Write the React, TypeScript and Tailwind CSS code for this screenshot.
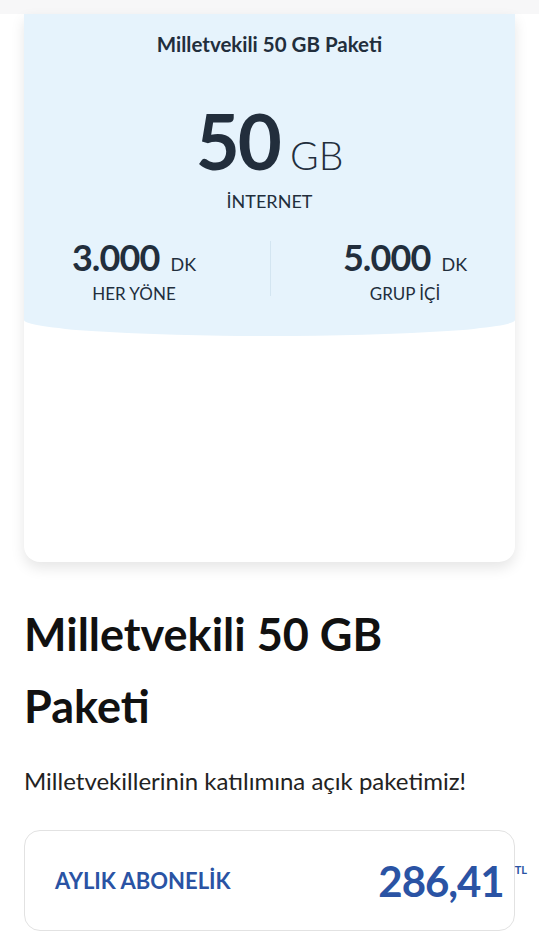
const font = "font-['Lato','Inter','Noto_Sans',sans-serif]";

function Minutes({ value, label, className }: { value: string; label: string; className: string }) {
  return (
    <div className={`flex flex-1 flex-col items-center ${className}`}>
      <div className="flex items-baseline gap-[11px] leading-[36px]">
        <span className="text-[36px] font-bold tracking-tight">{value}</span>
        <span className="text-[18px] font-normal">DK</span>
      </div>
      <span className="mt-[1px] text-[17px] leading-[22px]">{label}</span>
    </div>
  );
}

export default function App() {
  return (
    <div className={`min-h-screen bg-white text-[#222e3c] ${font}`}>
      <div className="h-[14px] bg-[#f7f7f8]" />

      <div className="px-6">
        <div className="h-[548px] overflow-hidden rounded-b-2xl bg-white shadow-[0_6px_14px_rgba(0,0,0,0.1)]">
          <div className="flex h-[322px] flex-col items-center rounded-b-[50%_16px] bg-[#e6f3fc]">
            <h2 className="mt-[18px] text-[20.5px] font-bold leading-[24px]">Milletvekili 50 GB Paketi</h2>

            <div className="mt-[55px] flex items-baseline gap-[10px] leading-[60px]">
              <span className="text-[76px] font-bold tracking-tight">50</span>
              <span className="text-[39px] font-light">GB</span>
            </div>
            <span className="mt-[5px] text-[18px] leading-[22px]">İNTERNET</span>

            <div className="mt-[27px] flex w-full items-stretch">
              <Minutes value="3.000" label="HER YÖNE" className="pr-[26px]" />
              <div className="mb-[9px] mt-[2px] w-px bg-[#d3e5f1]" />
              <Minutes value="5.000" label="GRUP İÇİ" className="pl-[24px]" />
            </div>
          </div>
        </div>
      </div>

      <div className="px-6 pt-9">
        <h1 className="text-[45px] font-bold leading-[72px] text-[#111]">Milletvekili 50 GB Paketi</h1>
        <p className="mt-[25px] text-[24px] leading-[28px] text-[#222]">
          Milletvekillerinin katılımına açık paketimiz!
        </p>

        <div className="mt-[35px] flex h-[101px] items-center justify-between rounded-2xl border border-[#e2e2e2] pl-[30px] pr-[11px]">
          <span className="text-[22px] font-bold text-[#2a53a4]">AYLIK ABONELİK</span>
          <div className="flex items-start text-[#2a53a4]">
            <span className="text-[42px] font-bold leading-[50px] tracking-tight">286,41</span>
            <span className="-mr-[24px] ml-[11px] mt-[6px] text-[11px] font-bold">TL</span>
          </div>
        </div>
      </div>
    </div>
  );
}
